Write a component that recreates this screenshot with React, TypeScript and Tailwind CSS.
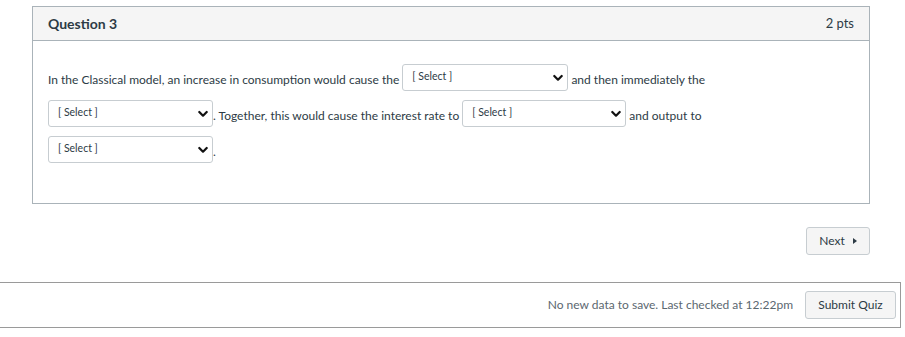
import { ReactNode } from 'react';

function Chevron() {
  return (
    <svg width="10" height="8" viewBox="0 0 10 8" className="absolute right-[4px] top-1/2 -translate-y-1/2">
      <path d="M1.3 2 L5 5.7 L8.7 2" fill="none" stroke="#111" strokeWidth="2.2" strokeLinecap="round" strokeLinejoin="round" />
    </svg>
  );
}

function FakeSelect({ width }: { width: string }) {
  return (
    <span
      className={`relative inline-block h-[27px] ${width} rounded-[3px] border border-[#c7cdd1] bg-white align-[-7px]`}
    >
      <span className="absolute left-[9px] top-[5px] text-[10.5px] leading-[12px] text-[#2d3b45]">
        [ Select ]
      </span>
      <Chevron />
    </span>
  );
}

function Button({ children, className }: { children: ReactNode; className?: string }) {
  return (
    <button
      className={`flex h-[28px] items-center rounded-[3px] border border-[#c7cdd1] bg-[#f5f5f5] text-[12px] text-[#2d3b45] ${className ?? ''}`}
    >
      {children}
    </button>
  );
}

export default function App() {
  return (
    <div className="min-h-[337px] bg-white pt-[6px] font-['Lato','Liberation_Sans',sans-serif] text-[#2d3b45]">
      <div className="ml-[32px] w-[838px]">
        {/* Question card */}
        <div className="border border-[#aab3b9]">
          <div className="flex h-[34px] items-center justify-between border-b border-[#aab3b9] bg-[#f5f5f5] px-[15px]">
            <span className="text-[14px] font-bold">Question 3</span>
            <span className="text-[13px] text-[#2d3b45]">2 pts</span>
          </div>
          <div className="px-[15px] pb-[33px] pt-[21px] text-[12px] leading-[36px]">
            In the Classical model, an increase in consumption would cause the{' '}
            <FakeSelect width="w-[166px]" /> and then immediately the{' '}
            <FakeSelect width="w-[165px]" />. Together, this would cause the interest rate to{' '}
            <FakeSelect width="w-[164px]" /> and output to <FakeSelect width="w-[165px]" />.
          </div>
        </div>

        <div className="mt-[23px] flex justify-end">
          <Button className="w-[64px] justify-center gap-[8px]">
            <span>Next</span>
            <svg width="4" height="6" viewBox="0 0 4 6">
              <path d="M0 0 L4 3 L0 6 Z" fill="#2d3b45" />
            </svg>
          </Button>
        </div>
      </div>

      {/* Footer bar */}
      <div className="mt-[27px] flex h-[46px] w-[901px] items-center justify-end gap-[12px] border-y border-r border-[#9a9a9a] pr-[4px]">
        <span className="text-[12px] text-[#5b6770]">No new data to save. Last checked at 12:22pm</span>
        <Button className="w-[91px] justify-center">Submit Quiz</Button>
      </div>
    </div>
  );
}
